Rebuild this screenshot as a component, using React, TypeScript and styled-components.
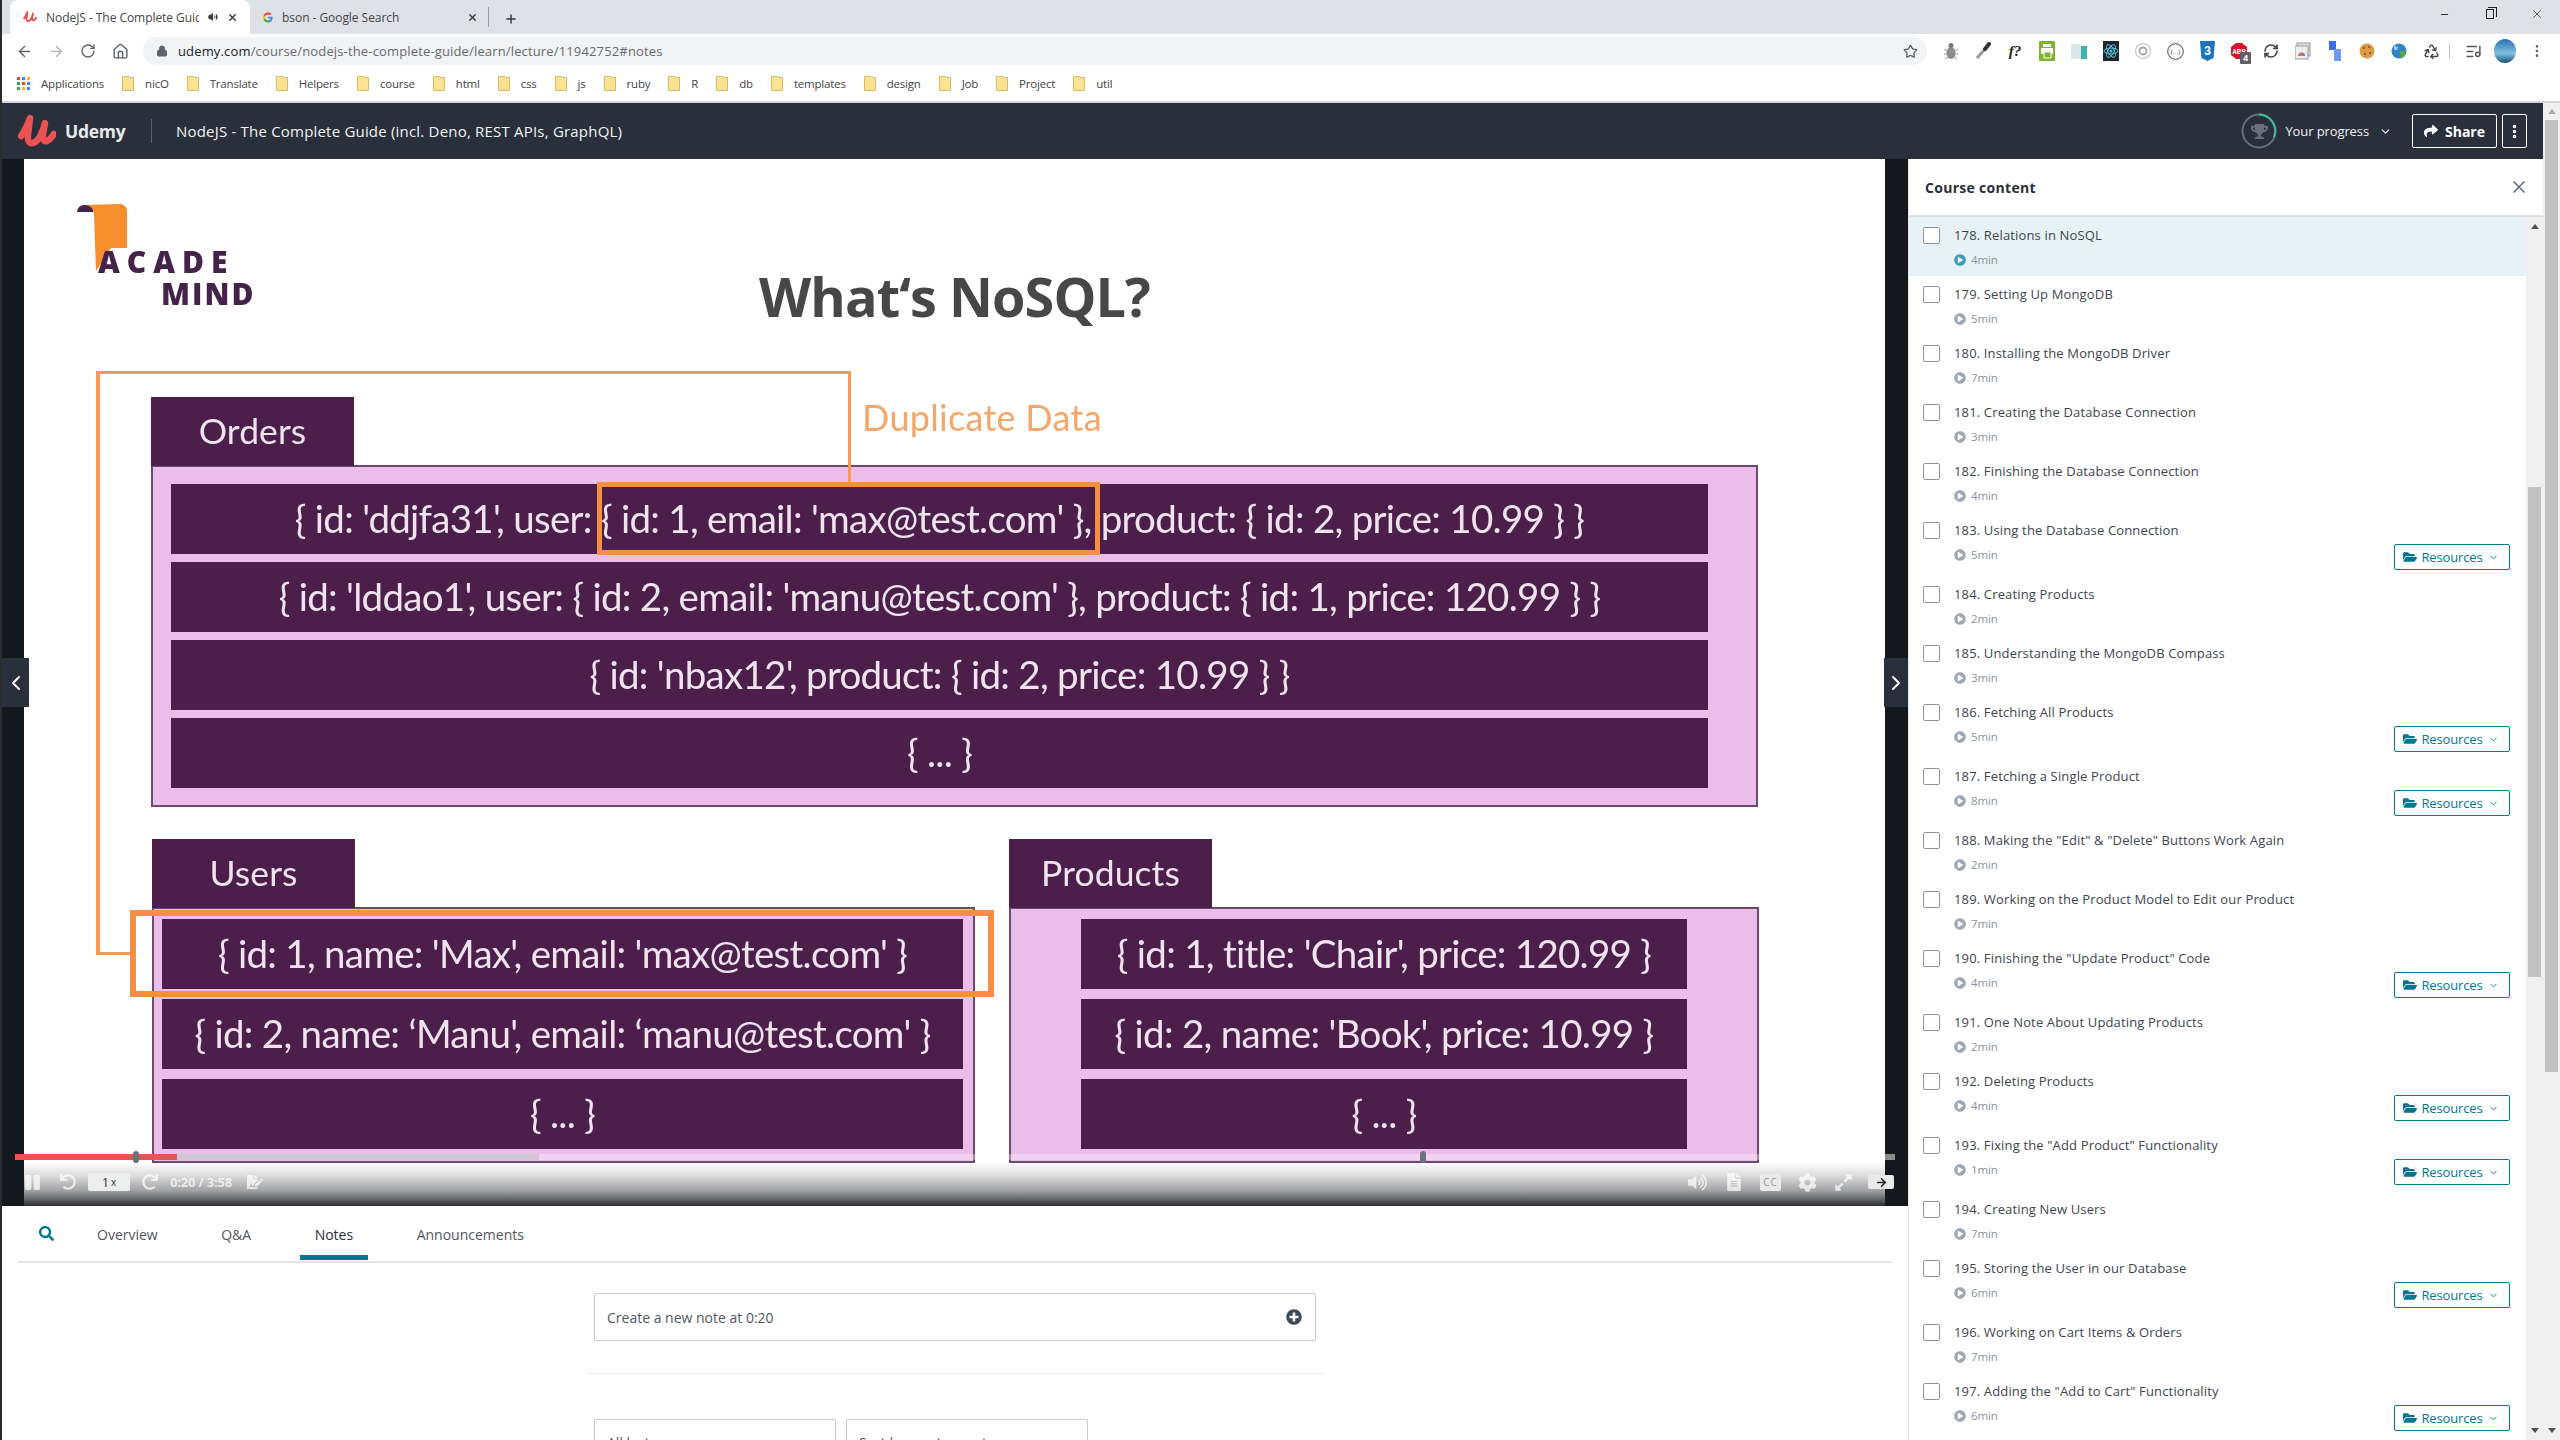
import React from 'react';
import styled, { createGlobalStyle } from 'styled-components';
import { ArrowLeft, ArrowRight, RotateCw, Home, Lock, Star, Plus, X, Minus, ChevronDown, ChevronLeft, ChevronRight, MoreVertical, Recycle, ListMusic, RefreshCw, Volume2 } from 'lucide-react';
import { FaFolderOpen, FaPlayCircle, FaShare, FaSearch, FaPlusCircle, FaVolumeUp, FaCog, FaExpandAlt, FaFileAlt, FaTrophy, FaUndo, FaRedo, FaPause, FaFileSignature } from 'react-icons/fa';

const Global = createGlobalStyle`
  html, body { margin: 0; padding: 0; background: #fff; overflow: hidden; }
  * { box-sizing: border-box; }
  body { font-family: "Open Sans", "Liberation Sans", sans-serif; }
`;

const Shell = styled.div`
  width: 2560px; height: 1440px; overflow: hidden; display: flex; flex-direction: column;
  border-left: 2px solid #2c2c2c; background: #fff;
`;

/* browser chrome */
const TabStrip = styled.div`
  height: 34px; background: #dee1e6; display: flex; align-items: flex-end; padding-left: 8px; position: relative; color: #3c4043;
`;
const BrowserTab = styled.div<{ $active?: boolean }>`
  width: 240px; height: 34px; border-radius: 8px 8px 0 0; background: ${p => (p.$active ? '#fff' : 'transparent')};
  display: flex; align-items: center; padding: 0 12px 0 13px; font-size: 12px; color: #444; white-space: nowrap; gap: 9px;
`;
const TabLabel = styled.span<{ $w: number }>`
  width: ${p => p.$w}px; overflow: hidden; letter-spacing: -0.05px; flex: none;
`;
const TabGlyph = styled.span`
  display: flex; color: #333; flex: none;
`;
const TabSep = styled.div`
  width: 1px; height: 20px; background: #9a9ca0; margin: 0 0 7px -2px;
`;
const NewTab = styled.span`
  margin: 0 0 8px 15px; display: flex; color: #333;
`;
const WindowBtns = styled.div`
  margin-left: auto; height: 28px; display: flex; align-items: center; gap: 36px; padding-right: 16px; align-self: flex-start;
`;
const RestoreIcon = styled.span`
  width: 8px; height: 10px; border: 1px solid #222; position: relative; display: block;
  &::after { content: ''; position: absolute; left: 1px; top: -3px; width: 8px; height: 9px; border-top: 1px solid #222; border-right: 1px solid #222; }
`;
const Toolbar = styled.div`
  height: 34px; background: #fff; display: flex; align-items: center; padding-left: 14px;
`;
const NavBtn = styled.span<{ $off?: boolean }>`
  width: 32px; display: flex; color: ${p => (p.$off ? '#b4b6b9' : '#5f6368')};
`;
const Omnibox = styled.div`
  margin-left: -1px; width: 1784px; height: 28px; border-radius: 14px; background: #f1f3f4; display: flex; align-items: center; padding: 0 9px 0 13px; font-size: 13px; color: #666a6f;
`;
const Url = styled.span`
  margin-left: 10px; letter-spacing: 0.15px; b { font-weight: 400; color: #222; }
`;
const StarBox = styled.span`
  margin-left: auto; display: flex; color: #5a5e63;
`;
const Exts = styled.div`
  display: flex; align-items: center; margin-left: 4px; padding-left: 4px;
`;
const ExtCell = styled.span`
  width: 32px; height: 20px; display: flex; align-items: center; justify-content: center; position: relative; flex: none;
`;
const ExtText = styled.span`
  font-family: "Liberation Serif", serif; font-style: italic; font-size: 15px; color: #222; font-weight: 700;
`;
const ExtBadge = styled.span`
  position: absolute; left: 17px; top: 11px; width: 11px; height: 12px; background: #5f6064; color: #fff; font-size: 9px; line-height: 12px; font-weight: 700; text-align: center; border-radius: 1px;
`;
const ExtDivider = styled.span`
  width: 1px; height: 16px; background: #c4c6c9; margin: 0 7px 0 2px;
`;
const Bookmarks = styled.div`
  height: 35px; background: #fff; border-bottom: 2px solid #d4d5d7; display: flex; align-items: center; padding: 0 0 2px 15px; font-size: 11.5px; color: #444; gap: 18px; letter-spacing: -0.2px;
`;
const Bookmark = styled.span`
  display: flex; align-items: center; gap: 11px;
`;

/* course header */
const Page = styled.div`
  flex: 1; display: flex; min-height: 0;
`;
const Content = styled.div`
  width: 2541px; display: flex; flex-direction: column;
`;
const CourseBar = styled.header`
  height: 56px; background: #29303b; display: flex; align-items: center; padding-left: 16px; color: #fff; flex: none;
`;
const UdemyWord = styled.span`
  margin-left: 9px; font-weight: 700; font-size: 17.5px; color: #e8e9eb; letter-spacing: -0.3px; width: 87px; border-right: 1px solid #5d636c; line-height: 24px;
`;
const CourseTitle = styled.span`
  margin-left: 24px; font-size: 15px; color: #f4f4f5; letter-spacing: 0.2px;
`;
const BarRight = styled.div`
  margin-left: auto; display: flex; align-items: center; padding-right: 16px;
`;
const Ring = styled.span`
  position: relative; width: 36px; height: 36px; display: flex; align-items: center; justify-content: center; color: #6b7078;
  svg.arc { position: absolute; inset: 0; }
`;
const ProgressLabel = styled.span`
  margin-left: 8px; font-size: 13px; color: #f0f0f1; letter-spacing: -0.1px; display: flex; align-items: center; gap: 10px;
`;
const ShareBtn = styled.span`
  margin-left: 20px; width: 85px; height: 34px; border: 1px solid #fff; border-radius: 2px; display: flex; align-items: center; justify-content: center; gap: 7px; font-weight: 700; font-size: 14px; color: #fff;
`;
const MoreBtn = styled.span`
  margin-left: 5px; width: 25px; height: 34px; border: 1px solid #fff; border-radius: 2px; display: flex; align-items: center; justify-content: center; color: #fff;
`;

const Body = styled.div`
  flex: 1; display: flex; min-height: 0;
`;
const Main = styled.main`
  width: 1906px; display: flex; flex-direction: column; flex: none;
`;

/* video */
const Stage = styled.section`
  height: 1047px; display: flex; background: #14171c; position: relative; flex: none; overflow: hidden;
`;
const Slide = styled.div`
  margin-left: 22px; width: 1861px; height: 100%; background: #fff; position: relative; flex: none; display: flex; flex-direction: column; color: #efe3ee; font-family: Lato, "Open Sans", sans-serif; filter: blur(0.4px);
`;
const SlideHead = styled.div`
  height: 238px; display: grid; grid-template-columns: 1fr auto 1fr; flex: none;
`;
const LogoBox = styled.div`
  margin: 45px 0 0 51px; width: 185px; height: 105px; position: relative;
  svg { position: absolute; left: 0; top: 0; }
`;
const LogoLine = styled.span<{ $x: number; $y: number; $s: number; $ls: number }>`
  position: absolute; left: ${p => p.$x}px; top: ${p => p.$y}px; font-family: "Open Sans", sans-serif; font-weight: 800; font-size: ${p => p.$s}px; letter-spacing: ${p => p.$ls}px; line-height: 1; color: #45224a;
`;
const SlideTitle = styled.h1`
  margin: 107px 0 0; font-family: "Open Sans", sans-serif; font-size: 54px; line-height: 60px; font-weight: 700; color: #474747; letter-spacing: -0.9px; white-space: nowrap;
`;
const TabRow = styled.div`
  display: flex; align-items: flex-start; height: 68px; flex: none;
`;
const TableTab = styled.div`
  width: 203px; height: 69px; padding-bottom: 2px; background: #4b1f4a; display: flex; align-items: center; justify-content: center; font-size: 35.5px; color: #efe3ee; position: relative; z-index: 1; letter-spacing: 0.1px;
`;
const DupLabel = styled.span`
  margin: -1px 0 0 508px; font-size: 36px; line-height: 42px; color: #f4a768; letter-spacing: 0.3px; white-space: nowrap;
`;
const Table = styled.div<{ $ml?: number; $w: number }>`
  margin-left: ${p => p.$ml || 0}px; width: ${p => p.$w}px; flex: none;
`;
const Panel = styled.div<{ $pad: string; $gap: number; $h: number }>`
  height: ${p => p.$h}px; background: #ebbde9; border: 2px solid #6a4a70; padding: ${p => p.$pad}; display: flex; flex-direction: column; gap: ${p => p.$gap}px;
`;
const DataRow = styled.div`
  height: 70px; background: #4b1f4a; color: #efe3ee; font-size: 38.5px; letter-spacing: -0.72px; display: flex; align-items: center; justify-content: center; white-space: nowrap; flex: none; padding-bottom: 2px;
`;
const BottomTables = styled.div`
  display: flex; gap: 34px; margin: 32px 0 0 128px;
`;
const OrangeBox = styled.div<{ $x: number; $y: number; $w: number; $h: number; $t: number }>`
  position: absolute; left: ${p => p.$x}px; top: ${p => p.$y}px; width: ${p => p.$w}px; height: ${p => p.$h}px; border: ${p => p.$t}px solid #f78e45; z-index: 2;
`;
const OrangeTopRight = styled.div`
  position: absolute; left: 72px; top: 212px; width: 755px; height: 112px; border: 3px solid #f79a55; border-left: 0; border-bottom: 0; z-index: 2;
`;
const OrangeLeftBottom = styled.div`
  position: absolute; left: 72px; top: 212px; width: 34px; height: 584px; border: 3px solid #f79a55; border-top: 0; border-right: 0; border-left-width: 4px; z-index: 2;
`;
const SideBlack = styled.div`
  flex: 1;
`;
const StageArrow = styled.span<{ $side: 'l' | 'r' }>`
  position: absolute; ${p => (p.$side === 'l' ? 'left: 0; width: 27px;' : 'right: 0; width: 24px;')} top: 499px; height: 49px; background: #29303b; color: #fff; display: flex; align-items: center; justify-content: center; z-index: 4;
`;
const Fade = styled.div`
  position: absolute; left: 22px; width: 1861px; bottom: 0; height: 44px; z-index: 3;
  background: linear-gradient(to bottom, rgba(30,32,36,0) 0%, rgba(30,32,36,.15) 30%, rgba(30,32,36,.42) 65%, rgba(30,32,36,.7) 85%, rgba(30,32,36,.95) 100%);
`;
const Track = styled.div`
  position: absolute; left: 13px; width: 1880px; top: 995px; height: 6px; background: rgba(255,255,255,.3); z-index: 4; display: flex;
`;
const Played = styled.div`
  width: 162px; background: #ec5252;
`;
const Buffered = styled.div`
  width: 362px; background: #cfc8d2;
`;
const TrackRest = styled.div`
  flex: 1; position: relative;
  &::after { content: ''; position: absolute; right: 0; top: 0; bottom: 0; width: 10px; background: #8b8b8b; }
`;
const Handle = styled.span<{ $x: number }>`
  position: absolute; left: ${p => p.$x}px; top: -3px; width: 6px; height: 12px; border-radius: 3px; background: #68737e;
`;
const Controls = styled.div`
  position: absolute; left: 22px; width: 1870px; bottom: 14px; height: 20px; display: flex; align-items: center; color: rgba(255,255,255,.72); z-index: 5;
`;
const Ctl = styled.span<{ $ml: number }>`
  margin-left: ${p => p.$ml}px; display: flex; align-items: center; flex: none;
`;
const Speed = styled.span`
  margin-left: 12px; width: 42px; height: 18px; background: #eceded; border-radius: 2px; color: #333; font-size: 13px; display: flex; align-items: center; justify-content: center; gap: 2px; flex: none;
  small { font-size: 10px; }
`;
const TimeText = styled.span`
  margin-left: 12px; font-size: 13px; font-weight: 700; letter-spacing: -0.2px; width: 66px; white-space: nowrap; flex: none;
`;
const CcBox = styled.span`
  margin-left: 17px; width: 21px; height: 17px; background: #eaeaea; border-radius: 2px; color: #999; font-size: 10px; display: flex; align-items: center; justify-content: center; letter-spacing: 1px; flex: none;
`;
const WideBox = styled.span`
  margin-left: 15px; width: 26px; height: 14px; background: #eaeaea; border-radius: 2px; color: #222; display: flex; align-items: center; justify-content: center; flex: none;
`;
const RightCtls = styled.div`
  margin-left: auto; display: flex; align-items: center;
`;

/* below the video */
const TabsBar = styled.nav`
  margin: 0 16px; height: 57px; border-bottom: 2px solid #e4e5e7; display: flex; flex: none; position: relative;
`;
const SearchIco = styled.span`
  margin: 20px 28px 0 21px; color: #007791; display: flex; align-self: flex-start;
`;
const PageTab = styled.span<{ $on?: boolean }>`
  height: 54px; padding: 19px 15px 0; margin-right: 33.5px; font-size: 14px; line-height: 20px; color: ${p => (p.$on ? '#29303b' : '#505763')}; border-bottom: 5px solid ${p => (p.$on ? '#007791' : 'transparent')};
`;
const NotesCol = styled.div`
  width: 738px; margin: 30px auto 0; padding: 0 8px; flex: none;
`;
const NoteInput = styled.div`
  height: 48px; border: 1px solid #c9cacc; border-radius: 2px; display: flex; align-items: center; justify-content: space-between; padding: 0 13px 0 12px; font-size: 14px; color: #505763; letter-spacing: 0;
  svg { color: #3f4a58; }
`;
const Rule = styled.div`
  height: 1px; background: #e8e9eb; margin: 32px -8px 45px;
`;
const Filters = styled.div`
  display: flex; gap: 10px;
`;
const SelectBox = styled.div`
  width: 242px; height: 46px; border: 1px solid #c9cacc; border-radius: 2px; display: flex; align-items: center; justify-content: space-between; padding: 0 12px; font-size: 14px; color: #505763;
`;

/* sidebar */
const Sidebar = styled.aside`
  width: 635px; border-left: 1px solid #e4e5e7; display: flex; flex-direction: column; flex: none; background: #fff; margin-left: 0;
`;
const SideHead = styled.div`
  height: 58px; border-bottom: 2px solid #dedfe0; display: flex; align-items: center; justify-content: space-between; padding: 0 14px 0 16px; font-weight: 700; font-size: 14px; color: #29303b; letter-spacing: 0.3px; flex: none;
  svg { color: #686f7a; }
`;
const SideBody = styled.div`
  flex: 1; display: flex; min-height: 0; overflow: hidden;
`;
const List = styled.ul`
  list-style: none; margin: 0; padding: 0; flex: 1;
`;
const Row = styled.li<{ $on?: boolean; $res?: boolean }>`
  height: ${p => (p.$res ? 64 : 59)}px; display: flex; padding: 9px 16px 6px 14px; background: ${p => (p.$on ? '#e6f2f5' : '#fff')}; position: relative;
`;
const Check = styled.span`
  width: 17px; height: 17px; border: 1px solid #8a92a3; border-radius: 2px; background: #fff; margin-top: 1px; flex: none;
`;
const RowText = styled.div`
  margin-left: 14px; flex: 1;
`;
const RowTitle = styled.div`
  font-size: 13px; line-height: 18px; color: #3d4450; letter-spacing: 0.15px;
`;
const RowMeta = styled.div<{ $on?: boolean }>`
  margin-top: 7px; display: flex; align-items: center; gap: 5px; font-size: 11.5px; line-height: 18px; color: #8a92a3; letter-spacing: -0.1px;
  svg { color: ${p => (p.$on ? '#3e9cb2' : '#a1a7b3')}; }
`;
const ResBtn = styled.span`
  align-self: flex-end; width: 116px; height: 26px; padding-right: 3px; border: 1px solid #007791; border-radius: 2px; color: #007791; font-size: 13px; display: flex; align-items: center; justify-content: center; gap: 5px; background: #fff; letter-spacing: -0.15px; flex: none;
`;
const ScrollTrack = styled.div<{ $w: number }>`
  width: ${p => p.$w}px; background: #f0f0f0; position: relative; flex: none; display: flex; flex-direction: column; align-items: center;
`;
const ScrollUp = styled.span<{ $top: number; $c: string }>`
  margin-top: ${p => p.$top}px; width: 0; height: 0; border: 4px solid transparent; border-top: 0; border-bottom: 5px solid ${p => p.$c};
`;
const ScrollDown = styled.span`
  position: absolute; bottom: 7px; width: 0; height: 0; border: 4px solid transparent; border-bottom: 0; border-top: 5px solid #505050;
`;
const Thumb = styled.span<{ $top: number; $h: number; $w: number }>`
  margin-top: ${p => p.$top}px; width: ${p => p.$w}px; height: ${p => p.$h}px; background: #c1c1c1; flex: none;
`;

const Folder = () => (
  <svg width="12" height="15" viewBox="0 0 12 15"><path d="M.5.5h6.5l.8 1H11.5v13H.5z" fill="#fde293" stroke="#d8bb62" /></svg>
);
const UdemyMark = ({ size = 38, color = '#ec5252', sw = 6.5 }: { size?: number; color?: string; sw?: number }) => (
  <svg width={size} height={size * 0.87} viewBox="0 0 38 33" fill="none" stroke={color} strokeWidth={sw} strokeLinecap="round" strokeLinejoin="round">
    <path d="M3 22 Q8 15 12 4 L10 21 Q9 30 15 29 Q22 27 27 9 L25 21 Q24 28 29 27 Q33 25 36 20" />
  </svg>
);
const GoogleG = () => (
  <svg width="15" height="15" viewBox="0 0 48 48">
    <path fill="#EA4335" d="M24 9.5c3.5 0 6.700 1.200 9.200 3.600l6.900-6.900C35.900 2.400 30.500 0 24 0 14.600 0 6.500 5.400 2.600 13.200l8 6.200C12.400 13.700 17.700 9.500 24 9.500z" />
    <path fill="#4285F4" d="M46.500 24.500c0-1.600-.1-3.100-.4-4.500H24v9h12.700c-.6 2.900-2.200 5.400-4.700 7.100l7.700 6c4.500-4.200 6.800-10.300 6.800-17.600z" />
    <path fill="#FBBC05" d="M10.500 28.600c-.5-1.400-.8-3-.8-4.600s.3-3.200.8-4.600l-8-6.200C.9 16.400 0 20.100 0 24s.9 7.600 2.600 10.800l7.900-6.200z" />
    <path fill="#34A853" d="M24 48c6.500 0 11.900-2.100 15.900-5.800l-7.700-6c-2.100 1.400-4.900 2.300-8.100 2.300-6.300 0-11.600-4.200-13.500-9.900l-8 6.200C6.500 42.600 14.600 48 24 48z" />
  </svg>
);
const Apps = () => (
  <svg width="13" height="13" viewBox="0 0 13 13">
    {[0, 1, 2].flatMap(r => [0, 1, 2].map(c => (
      <rect key={`${r}${c}`} x={c * 5} y={r * 5} width="3" height="3" fill={['#ea4335', '#4285f4', '#fbbc05', '#34a853', '#ea4335', '#4285f4', '#34a853', '#fbbc05', '#4285f4'][r * 3 + c]} />
    )))}
  </svg>
);

const extensions: React.ReactNode[] = [
  <svg width="14" height="18" viewBox="0 0 14 18" key="bug"><ellipse cx="7" cy="11" rx="4.500" ry="6" fill="#8d8d8d" /><circle cx="7" cy="3.500" r="2.500" fill="#777" /><path d="M0 7l3 2M14 7l-3 2M0 12h3M14 12h-3M1 17l3-2M13 17l-3-2" stroke="#999" /></svg>,
  <svg width="16" height="18" viewBox="0 0 16 18" key="drop"><path d="M2 16l9-10" stroke="#999" strokeWidth="3" /><path d="M10 7l4-5" stroke="#333" strokeWidth="4" strokeLinecap="round" /></svg>,
  <ExtText key="f">f?</ExtText>,
  <svg width="16" height="20" viewBox="0 0 16 20" key="print"><rect width="16" height="20" rx="1" fill="#7cb52f" /><path d="M4 3h8v3H4zM2 7h12v6H2z" fill="#fff" /><path d="M5 11h7v6H5z" fill="#7cb52f" stroke="#fff" /></svg>,
  <svg width="16" height="16" viewBox="0 0 16 16" key="book"><rect x="0" y="1" width="10" height="15" fill="#dce6e6" /><rect x="10" y="3" width="6" height="13" fill="#3fb6ad" /></svg>,
  <svg width="16" height="20" viewBox="0 0 16 20" key="react"><rect width="16" height="20" fill="#1f2528" /><g fill="none" stroke="#55c7e6"><ellipse cx="8" cy="10" rx="7" ry="3" /><ellipse cx="8" cy="10" rx="7" ry="3" transform="rotate(60 8 10)" /><ellipse cx="8" cy="10" rx="7" ry="3" transform="rotate(120 8 10)" /></g><circle cx="8" cy="10" r="1.500" fill="#55c7e6" /></svg>,
  <svg width="16" height="18" viewBox="0 0 16 18" key="ion"><circle cx="8" cy="9" r="7.500" fill="none" stroke="#cfcfcf" strokeWidth="1.500" /><circle cx="8" cy="9" r="3.500" fill="none" stroke="#aaa" strokeWidth="2" /></svg>,
  <svg width="17" height="17" viewBox="0 0 17 17" key="json"><circle cx="8.500" cy="8.500" r="7.800" fill="#fff" stroke="#444" /><text x="8.500" y="11" fontSize="6" textAnchor="middle" fill="#444" fontFamily="Liberation Sans">{'{…}'}</text></svg>,
  <svg width="15" height="20" viewBox="0 0 15 20" key="css"><path d="M0 0h15l-1.400 17-6.100 3-6.100-3z" fill="#1c75bb" /><text x="7.500" y="14" fontSize="12" fontWeight="700" textAnchor="middle" fill="#fff" fontFamily="Liberation Sans">3</text></svg>,
  <React.Fragment key="abp"><svg width="16" height="18" viewBox="0 0 16 18"><path d="M5 1h6l5 4v8l-5 4H5l-5-4V5z" fill="#d8132a" /><text x="8" y="11.500" fontSize="6.500" fontWeight="700" textAnchor="middle" fill="#fff" fontFamily="Liberation Sans">ABP</text></svg><ExtBadge>4</ExtBadge></React.Fragment>,
  <RefreshCw size={16} color="#444" strokeWidth={2.4} key="sync" />,
  <svg width="16" height="18" viewBox="0 0 16 18" key="win"><rect x="2" y="1" width="13" height="13" fill="#ddd" stroke="#999" /><rect x="0" y="4" width="13" height="13" fill="#eee" stroke="#999" /><path d="M3 14a3.500 3.500 0 0 1 7 0z" fill="#e06b50" /><path d="M6.500 10.500a3.500 3.500 0 0 1 3.500 3.500H8z" fill="#4c8bf5" /></svg>,
  <svg width="12" height="20" viewBox="0 0 12 20" key="blue"><rect x="0" y="0" width="7" height="9" fill="#3b6cf0" /><rect x="5" y="8" width="7" height="12" fill="#6f9bf7" /></svg>,
  <svg width="16" height="18" viewBox="0 0 16 18" key="cookie"><circle cx="8" cy="9" r="7.500" fill="#dd9a45" /><g fill="#7a4a1a"><circle cx="5" cy="6" r="1" /><circle cx="10" cy="5" r="1" /><circle cx="11" cy="11" r="1" /><circle cx="6" cy="12" r="1" /></g></svg>,
  <svg width="16" height="18" viewBox="0 0 16 18" key="globe"><circle cx="8" cy="9" r="7.500" fill="#2f86c5" /><path d="M9 9c3-1 6 1 6 3a7 7 0 0 1-5 4z" fill="#5fa83c" /><path d="M3 4l4 1-1 3-3 0z" fill="#a4cfe9" /></svg>,
  <Recycle size={17} color="#444" key="rec" />,
];

const bookmarks = ['nicO', 'Translate', 'Helpers', 'course', 'html', 'css', 'js', 'ruby', 'R', 'db', 'templates', 'design', 'Job', 'Project', 'util'];

const lectures: [string, number, boolean][] = [
  ['178. Relations in NoSQL', 4, false],
  ['179. Setting Up MongoDB', 5, false],
  ['180. Installing the MongoDB Driver', 7, false],
  ['181. Creating the Database Connection', 3, false],
  ['182. Finishing the Database Connection', 4, false],
  ['183. Using the Database Connection', 5, true],
  ['184. Creating Products', 2, false],
  ['185. Understanding the MongoDB Compass', 3, false],
  ['186. Fetching All Products', 5, true],
  ['187. Fetching a Single Product', 8, true],
  ['188. Making the "Edit" & "Delete" Buttons Work Again', 2, false],
  ['189. Working on the Product Model to Edit our Product', 7, false],
  ['190. Finishing the "Update Product" Code', 4, true],
  ['191. One Note About Updating Products', 2, false],
  ['192. Deleting Products', 4, true],
  ['193. Fixing the "Add Product" Functionality', 1, true],
  ['194. Creating New Users', 7, false],
  ['195. Storing the User in our Database', 6, true],
  ['196. Working on Cart Items & Orders', 7, false],
  ['197. Adding the "Add to Cart" Functionality', 6, true],
];

export default function App() {
  return (
    <>
      <Global />
      <Shell>
        <TabStrip>
          <BrowserTab $active>
            <UdemyMark size={15} sw={5} />
            <TabLabel $w={153}>NodeJS - The Complete Guide (incl. Deno</TabLabel>
            <TabGlyph><Volume2 size={10} fill="#333" /></TabGlyph>
            <TabGlyph><X size={11} strokeWidth={3} /></TabGlyph>
          </BrowserTab>
          <BrowserTab>
            <GoogleG />
            <TabLabel $w={176}>bson - Google Search</TabLabel>
            <TabGlyph><X size={11} strokeWidth={3} /></TabGlyph>
          </BrowserTab>
          <TabSep />
          <NewTab><Plus size={14} strokeWidth={2.5} /></NewTab>
          <WindowBtns>
            <Minus size={11} color="#222" />
            <RestoreIcon />
            <X size={14} color="#222" strokeWidth={1.2} />
          </WindowBtns>
        </TabStrip>
        <Toolbar>
          <NavBtn><ArrowLeft size={17} /></NavBtn>
          <NavBtn $off><ArrowRight size={17} /></NavBtn>
          <NavBtn><RotateCw size={16} /></NavBtn>
          <NavBtn><Home size={17} /></NavBtn>
          <Omnibox>
            <Lock size={12} fill="#5f6368" color="#5f6368" />
            <Url><b>udemy.com</b>/course/nodejs-the-complete-guide/learn/lecture/11942752#notes</Url>
            <StarBox><Star size={15} /></StarBox>
          </Omnibox>
          <Exts>
            {extensions.map((e, i) => <ExtCell key={i}>{e}</ExtCell>)}
            <ExtDivider />
            <ExtCell><ListMusic size={17} color="#555" /></ExtCell>
            <ExtCell>
              <svg width="22" height="24" viewBox="0 0 22 24"><defs><linearGradient id="av" x1="0" y1="0" x2="0" y2="1"><stop offset="0" stopColor="#2a6fb3" /><stop offset=".6" stopColor="#7ec1de" /><stop offset="1" stopColor="#1a4f80" /></linearGradient></defs><ellipse cx="11" cy="12" rx="11" ry="12" fill="url(#av)" /></svg>
            </ExtCell>
            <ExtCell><MoreVertical size={16} color="#5f6368" /></ExtCell>
          </Exts>
        </Toolbar>
        <Bookmarks>
          <Bookmark><Apps />Applications</Bookmark>
          {bookmarks.map(b => <Bookmark key={b}><Folder />{b}</Bookmark>)}
        </Bookmarks>
        <Page>
          <Content>
            <CourseBar>
              <UdemyMark size={38} />
              <UdemyWord>Udemy</UdemyWord>
              <CourseTitle>NodeJS - The Complete Guide (incl. Deno, REST APIs, GraphQL)</CourseTitle>
              <BarRight>
                <Ring>
                  <svg className="arc" width="36" height="36" viewBox="0 0 36 36" fill="none">
                    <circle cx="18" cy="18" r="16.500" stroke="#6b7078" strokeWidth="2" />
                    <path d="M18 1.500A16.500 16.500 0 0 1 33 24" stroke="#3dbd94" strokeWidth="2" />
                  </svg>
                  <FaTrophy size={17} />
                </Ring>
                <ProgressLabel>Your progress <ChevronDown size={13} /></ProgressLabel>
                <ShareBtn><FaShare size={14} />Share</ShareBtn>
                <MoreBtn><MoreVertical size={17} strokeWidth={3} /></MoreBtn>
              </BarRight>
            </CourseBar>
            <Body>
              <Main>
                <Stage>
                  <Slide>
                    <SlideHead>
                      <LogoBox>
                        <svg width="60" height="72" viewBox="0 0 60 72">
                          <path d="M2 8 Q3 1 9 1 L18 1 L18 8z" fill="#45224a" />
                          <path d="M9 1 L46 0 Q52 1 52 8 L52 44 L36 44 L21 67 L19 10 Q18 1 9 1z" fill="#f78e2e" />
                        </svg>
                        <LogoLine $x={23} $y={43} $s={30} $ls={7}>ACADE</LogoLine>
                        <LogoLine $x={86} $y={75} $s={30} $ls={2}>MIND</LogoLine>
                      </LogoBox>
                      <SlideTitle>What‘s NoSQL?</SlideTitle>
                      <span />
                    </SlideHead>
                    <Table $ml={127} $w={1607}>
                      <TabRow>
                        <TableTab>Orders</TableTab>
                        <DupLabel>Duplicate Data</DupLabel>
                      </TabRow>
                      <Panel $h={342} $gap={8} $pad="17px 48px 0 18px">
                        <DataRow>{"{ id: 'ddjfa31', user: { id: 1, email: 'max@test.com' }, product: { id: 2, price: 10.99 } }"}</DataRow>
                        <DataRow>{"{ id: 'lddao1', user: { id: 2, email: 'manu@test.com' }, product: { id: 1, price: 120.99 } }"}</DataRow>
                        <DataRow>{"{ id: 'nbax12', product: { id: 2, price: 10.99 } }"}</DataRow>
                        <DataRow>{'{ ... }'}</DataRow>
                      </Panel>
                    </Table>
                    <BottomTables>
                      <Table $w={823}>
                        <TabRow><TableTab>Users</TableTab></TabRow>
                        <Panel $h={256} $gap={10} $pad="10px 10px 0 8px">
                          <DataRow>{"{ id: 1, name: 'Max', email: 'max@test.com' }"}</DataRow>
                          <DataRow>{"{ id: 2, name: ‘Manu', email: ‘manu@test.com' }"}</DataRow>
                          <DataRow>{'{ ... }'}</DataRow>
                        </Panel>
                      </Table>
                      <Table $w={750}>
                        <TabRow><TableTab>Products</TableTab></TabRow>
                        <Panel $h={256} $gap={10} $pad="10px 70px 0 70px">
                          <DataRow>{"{ id: 1, title: 'Chair', price: 120.99 }"}</DataRow>
                          <DataRow>{"{ id: 2, name: 'Book', price: 10.99 }"}</DataRow>
                          <DataRow>{'{ ... }'}</DataRow>
                        </Panel>
                      </Table>
                    </BottomTables>
                    <OrangeTopRight />
                    <OrangeLeftBottom />
                    <OrangeBox $x={573} $y={323} $w={503} $h={73} $t={5} />
                    <OrangeBox $x={106} $y={751} $w={864} $h={87} $t={6} />
                  </Slide>
                  <SideBlack />
                  <StageArrow $side="l"><ChevronLeft size={24} strokeWidth={2} /></StageArrow>
                  <StageArrow $side="r"><ChevronRight size={24} strokeWidth={2} /></StageArrow>
                  <Fade />
                  <Track>
                    <Played />
                    <Buffered />
                    <TrackRest />
                    <Handle $x={118} />
                    <Handle $x={1405} />
                  </Track>
                  <Controls>
                    <Ctl $ml={0}><FaPause size={17} /></Ctl>
                    <Ctl $ml={19}><FaUndo size={16} /></Ctl>
                    <Speed>1<small>x</small></Speed>
                    <Ctl $ml={12}><FaRedo size={16} /></Ctl>
                    <TimeText>0:20 / 3:58</TimeText>
                    <Ctl $ml={11}><FaFileSignature size={16} /></Ctl>
                    <RightCtls>
                      <FaVolumeUp size={19} />
                      <Ctl $ml={18}><FaFileAlt size={18} /></Ctl>
                      <CcBox>CC</CcBox>
                      <Ctl $ml={17}><FaCog size={19} /></Ctl>
                      <Ctl $ml={17}><FaExpandAlt size={19} /></Ctl>
                      <WideBox><ArrowRight size={13} strokeWidth={3} /></WideBox>
                    </RightCtls>
                  </Controls>
                </Stage>
                <TabsBar>
                  <SearchIco><FaSearch size={15} /></SearchIco>
                  <PageTab>Overview</PageTab>
                  <PageTab>Q&amp;A</PageTab>
                  <PageTab $on>Notes</PageTab>
                  <PageTab>Announcements</PageTab>
                </TabsBar>
                <NotesCol>
                  <NoteInput>Create a new note at 0:20<FaPlusCircle size={16} /></NoteInput>
                  <Rule />
                  <Filters>
                    <SelectBox>All lectures<ChevronDown size={13} /></SelectBox>
                    <SelectBox>Sort by most recent<ChevronDown size={13} /></SelectBox>
                  </Filters>
                </NotesCol>
              </Main>
              <Sidebar>
                <SideHead>Course content<X size={20} /></SideHead>
                <SideBody>
                  <List>
                    {lectures.map(([t, m, r], i) => (
                      <Row key={t} $on={i === 0} $res={r}>
                        <Check />
                        <RowText>
                          <RowTitle>{t}</RowTitle>
                          <RowMeta $on={i === 0}><FaPlayCircle size={12} />{m}min</RowMeta>
                        </RowText>
                        {r && <ResBtn><FaFolderOpen size={14} />Resources<ChevronDown size={11} /></ResBtn>}
                      </Row>
                    ))}
                  </List>
                  <ScrollTrack $w={17}>
                    <ScrollUp $top={7} $c="#505050" />
                    <Thumb $top={258} $h={490} $w={13} />
                    <ScrollDown />
                  </ScrollTrack>
                </SideBody>
              </Sidebar>
            </Body>
          </Content>
          <ScrollTrack $w={17}>
            <ScrollUp $top={6} $c="#a9a9a9" />
            <Thumb $top={6} $h={952} $w={13} />
            <ScrollDown />
          </ScrollTrack>
        </Page>
      </Shell>
    </>
  );
}
